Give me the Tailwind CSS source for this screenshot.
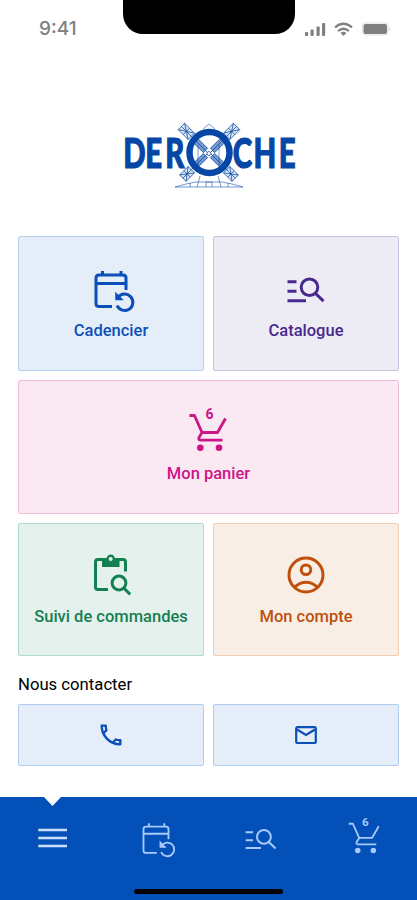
<!DOCTYPE html>
<html lang="fr">
<head>
    <meta charset="UTF-8">
    <title>Deroche</title>
    <script src="https://cdn.jsdelivr.net/npm/@tailwindcss/browser@4"></script>
</head>
<body class="bg-white font-['Roboto',sans-serif]">
    <!-- Shared icons -->
    <svg class="hidden">
        <symbol id="calendar" viewBox="0 0 48 48" class="overflow-visible">
            <path d="M39 23V11Q39 8 36 8H12Q9 8 9 11V36.500Q9 39.500 12 39.500H25M9 16.500H39M15.500 4V8M34 4V8" />
            <path d="M31 30.500A8.200 8.200 0 1 1 30.100 38.500" />
            <path d="M29 26.500V32.500H35Z" fill="currentColor" stroke-width="1.500" />
        </symbol>
        <symbol id="catalog" viewBox="0 0 48 48" class="overflow-visible">
            <path d="M5.500 14.800H14.500M5.500 24.300H14.500M5.500 33.700H24M33 26L41.500 34.200" />
            <circle cx="27.500" cy="20.300" r="8.300" />
        </symbol>
        <symbol id="cart" viewBox="0 0 48 48" class="overflow-visible">
            <path d="M4.500 4.500H9.500L17 21.500H32.500L40.500 7.500M17 21.500L14 26.500Q13 29.200 16 29.200H37.500" stroke-linejoin="round" />
            <circle cx="15.300" cy="36.700" r="3.300" fill="currentColor" stroke="none" />
            <circle cx="34" cy="36.700" r="3.300" fill="currentColor" stroke="none" />
            <text x="24.500" y="7.500" text-anchor="middle" font-size="14" font-weight="700" fill="currentColor" stroke="none">6</text>
        </symbol>
    </svg>

    <div class="flex flex-col w-[417px] h-[900px] overflow-hidden">
        <header class="flex justify-between h-[60px] text-[#808080]">
            <div class="w-[123px] pl-[39px] pt-[17px] text-[19px] leading-6 font-medium font-['Inter',sans-serif]">9:41</div>
            <div class="w-[172px] h-[34px] bg-black rounded-b-[20px]"></div>
            <div class="w-[122px] pl-2.5 pt-[22px]">
                <svg class="w-[88px] h-4" viewBox="0 0 88 16" fill="currentColor">
                    <rect x="0" y="10" width="3.200" height="4" rx="1" />
                    <rect x="5.500" y="7.500" width="3.200" height="6.500" rx="1" />
                    <rect x="11.500" y="4.500" width="3.200" height="9.500" rx="1" />
                    <rect x="17" y="1" width="3.200" height="13" rx="1" />
                    <g fill="none" stroke="currentColor" stroke-width="2.200">
                        <path d="M30 5.500Q38.500 -2 47 5.500" />
                        <path d="M33 9Q38.500 4.500 44 9" />
                    </g>
                    <path d="M35.500 11Q38.500 8.500 41.500 11L38.500 14Z" />
                    <rect x="57.500" y="1" width="25.500" height="12" rx="3" fill="none" stroke="#dedede" />
                    <rect x="58.500" y="2" width="23.500" height="10" rx="2" />
                    <path d="M84.500 5Q86.500 7 84.500 9Z" fill="#cfcfcf" />
                </svg>
            </div>
        </header>

        <main class="flex-1 px-[18px]">
            <div class="flex justify-center h-44 pt-[60px]">
                <svg class="w-[180px] h-[72px] text-[#0647a6]" viewBox="119 120 180 72" fill="none" stroke="currentColor">
                    <!-- mill body and base -->
                    <path d="M175 187L186 184L196 182H222L232 184L243 187ZM200 176L197 187M218 176L221 187M206 187V182H212V187M198 145V168M219 145V168M203 129L209 124L215 129M190 183V187M228 183V187" stroke-width="0.800" stroke-opacity=".7" />
                    <ellipse cx="209.500" cy="152.500" rx="20" ry="20.500" stroke-width="6.500" />
                    <!-- sails -->
                    <g stroke-width="0.900" stroke-opacity=".8">
                        <g transform="translate(209 154) rotate(45)">
                            <path d="M0 0V-39M-4.500 -25H4.500V-39H-4.500ZM-4.500 -32H4.500M-4.500 -39L4.500 -25M4.500 -39L-4.500 -25" fill="currentColor" fill-opacity=".15" />
                            <rect x="-3" y="-18" width="6" height="13" fill="currentColor" fill-opacity=".55" />
                        </g>
                        <g transform="translate(209 154) rotate(-45)">
                            <path d="M0 0V-39M-4.500 -25H4.500V-39H-4.500ZM-4.500 -32H4.500M-4.500 -39L4.500 -25M4.500 -39L-4.500 -25" fill="currentColor" fill-opacity=".15" />
                            <rect x="-3" y="-18" width="6" height="13" fill="currentColor" fill-opacity=".55" />
                        </g>
                        <g transform="translate(209 152) rotate(135)">
                            <path d="M0 0V-37M-4.500 -25H4.500V-37H-4.500ZM-4.500 -31H4.500M-4.500 -37L4.500 -25M4.500 -37L-4.500 -25" fill="currentColor" fill-opacity=".15" />
                            <rect x="-3" y="-18" width="6" height="13" fill="currentColor" fill-opacity=".55" />
                        </g>
                        <g transform="translate(209 152) rotate(-135)">
                            <path d="M0 0V-37M-4.500 -25H4.500V-37H-4.500ZM-4.500 -31H4.500M-4.500 -37L4.500 -25M4.500 -37L-4.500 -25" fill="currentColor" fill-opacity=".15" />
                            <rect x="-3" y="-18" width="6" height="13" fill="currentColor" fill-opacity=".55" />
                        </g>
                        <circle cx="209" cy="153.500" r="2" fill="white" />
                    </g>
                    <!-- condensed lettering, x values are before the 0.7 scale -->
                    <g class="font-['Lato',sans-serif]" font-size="42" font-weight="900" fill="currentColor" stroke-width="1.200">
                        <text transform="translate(123.300 167.500) scale(.7 1)" x="0 31.500 60">DER</text>
                        <text transform="translate(232.800 167.500) scale(.7 1)" x="0 29.500 65.800">CHE</text>
                    </g>
                </svg>
            </div>

            <div class="grid grid-cols-2 gap-[9px] text-[16.5px] leading-5 font-medium">
                <a class="flex flex-col items-center h-[135px] pt-[30px] rounded-xs border border-[#b3d1ef] bg-[#e5edf8] text-[#0b50b8]">
                    <svg class="size-12 overflow-visible" fill="none" stroke="currentColor" stroke-width="3"><use href="#calendar" /></svg>
                    <span class="mt-1.5">Cadencier</span>
                </a>
                <a class="flex flex-col items-center h-[135px] pt-[30px] rounded-xs border border-[#c6c5df] bg-[#edecf5] text-[#48288c]">
                    <svg class="size-12 overflow-visible" fill="none" stroke="currentColor" stroke-width="3"><use href="#catalog" /></svg>
                    <span class="mt-1.5">Catalogue</span>
                </a>
                <a class="col-span-2 flex flex-col items-center h-[134px] pt-[30px] rounded-xs border border-[#f0bcd7] bg-[#fae8f3] text-[#cc1587]">
                    <svg class="size-12 overflow-visible" fill="none" stroke="currentColor" stroke-width="2.8"><use href="#cart" /></svg>
                    <span class="mt-[5px]">Mon panier</span>
                </a>
                <a class="flex flex-col items-center h-[133px] pt-[30px] rounded-xs border border-[#addaca] bg-[#e5f1ed] text-[#148052]">
                    <svg class="size-12" viewBox="0 0 48 48" fill="none" stroke="currentColor" stroke-width="3">
                        <path d="M38.500 17.500V8Q38.500 5.500 36 5.500H11Q8.500 5.500 8.500 8V33Q8.500 35.500 11 35.500H21" />
                        <path d="M15 5H19.500Q20 .5 23.700 .5Q27.500 .5 28 5H32.500V13H15Z" fill="currentColor" stroke="none" />
                        <circle cx="23.700" cy="5" r="2" fill="#e5f1ed" stroke="none" />
                        <circle cx="32" cy="29" r="6.900" />
                        <path d="M36.700 34L43.200 40.300" />
                    </svg>
                    <span class="mt-[5px]">Suivi de commandes</span>
                </a>
                <a class="flex flex-col items-center h-[133px] pt-[30px] rounded-xs border border-[#f2cdb0] bg-[#f8eee6] text-[#bf500b]">
                    <svg class="size-12" viewBox="0 0 48 48" fill="none" stroke="currentColor" stroke-width="3">
                        <circle cx="24" cy="21" r="17" />
                        <circle cx="24" cy="15.800" r="4.800" />
                        <path d="M12.500 33Q24 23.500 35.500 33" />
                    </svg>
                    <span class="mt-[5px]">Mon compte</span>
                </a>
            </div>

            <h2 class="mt-[18px] text-[16.7px] leading-[22px] text-black">Nous contacter</h2>
            <div class="grid grid-cols-2 gap-[9px] mt-2 text-[#0b50b8]">
                <a class="flex items-center justify-center h-[62px] rounded-xs border border-[#aecdf0] bg-[#e5edf8]">
                    <svg class="size-7" viewBox="0 0 24 24" fill="currentColor">
                        <path d="M6.540 5c.060.890.210 1.760.450 2.590l-1.200 1.200c-.410-1.200-.670-2.470-.760-3.790h1.510m9.860 12.020c.850.240 1.720.390 2.600.450v1.490c-1.320-.090-2.590-.350-3.800-.750l1.200-1.190M7.500 3H4c-.550 0-1 .450-1 1 0 9.390 7.610 17 17 17 .550 0 1-.450 1-1v-3.490c0-.550-.450-1-1-1-1.240 0-2.450-.200-3.570-.570-.100-.040-.210-.050-.310-.050-.260 0-.510.100-.710.290l-2.200 2.200c-2.830-1.450-5.150-3.760-6.590-6.590l2.200-2.200c.280-.280.360-.670.250-1.020C8.700 6.450 8.500 5.250 8.500 4c0-.550-.450-1-1-1z" />
                    </svg>
                </a>
                <a class="flex items-center justify-center h-[62px] rounded-xs border border-[#aecdf0] bg-[#e5edf8]">
                    <svg class="w-[22px] h-[18px]" viewBox="0 0 22 18" fill="none" stroke="currentColor" stroke-width="2.200">
                        <rect x="1.200" y="1.200" width="19.600" height="15.800" rx="1.300" />
                        <path d="M2 3.500L11 9L20 3.500" />
                    </svg>
                </a>
            </div>
        </main>

        <nav class="relative grid grid-cols-4 justify-items-center h-[103px] pt-[23px] bg-[#0250b8] text-[#a9c9fb]">
            <svg class="absolute left-[44px] top-0 w-[17px] h-[9px]" viewBox="0 0 17 9" fill="white"><path d="M0 0H17L8.500 9Z" /></svg>
            <svg class="size-10" viewBox="0 0 48 48" stroke="#cbdfff" stroke-width="3"><path d="M7.500 12H42M7.500 21.600H42M7.500 31.200H42" /></svg>
            <svg class="size-10 overflow-visible" fill="none" stroke="currentColor" stroke-width="2.200"><use href="#calendar" /></svg>
            <svg class="size-10 overflow-visible" fill="none" stroke="currentColor" stroke-width="2.400"><use href="#catalog" /></svg>
            <svg class="size-10 overflow-visible" fill="none" stroke="currentColor" stroke-width="2.200"><use href="#cart" /></svg>
            <div class="absolute bottom-1.5 left-[134px] w-[149px] h-[5px] rounded-full bg-black"></div>
        </nav>
    </div>
</body>
</html>
